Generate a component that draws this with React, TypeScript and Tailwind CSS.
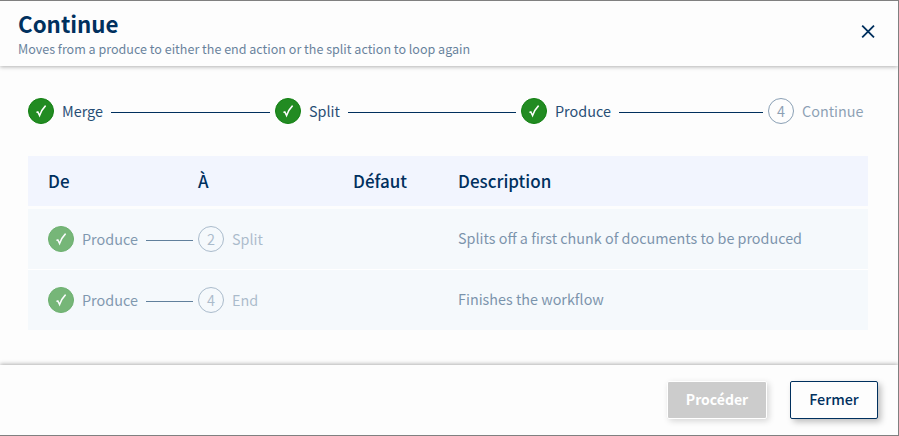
import React from "react";

function Check() {
  return (
    <svg width="12" height="14" viewBox="0 0 12 14" fill="none" stroke="white">
      <path d="M1.4 8.4 L2.8 8 L4.6 11.6 C6 7.6 7.8 4.4 10.6 1.6" strokeWidth="1.5" />
    </svg>
  );
}

function Done() {
  return (
    <span className="flex size-[26px] shrink-0 items-center justify-center rounded-full border border-[#118011] bg-[#228b22]">
      <Check />
    </span>
  );
}

function Num({ n }: { n: number }) {
  return (
    <span className="flex size-[26px] shrink-0 items-center justify-center rounded-full border border-[#00305e] text-[14.4px] leading-[24px]">
      {n}
    </span>
  );
}

function Row({ n, to, text }: { n: number; to: string; text: string }) {
  return (
    <div className="flex h-[60px] items-center bg-[#f5f9fc] pl-5">
      <div className="flex w-[150px] items-center pr-[5px] opacity-60">
        <Done />
        <span className="ml-2 w-[56px] text-[14.4px] leading-5 opacity-80">Produce</span>
        <span className="ml-2 mt-[3px] h-px w-[47px] bg-[#00305e]" />
      </div>
      <div className="flex w-[260px] items-center opacity-30">
        <Num n={n} />
        <span className="ml-2 text-[14.4px] leading-5">{to}</span>
      </div>
      <div className="mb-[2px] text-[14.36px] leading-5 opacity-50">{text}</div>
    </div>
  );
}

export default function App() {
  return (
    <div className="flex h-[436px] w-[899px] flex-col overflow-hidden border-t border-r border-b border-[#808080] bg-[#fdfdfd] text-[#00305e] [font-family:'Noto_Sans_CJK_SC',sans-serif]">
      <header className="flex h-[65px] shrink-0 justify-between pl-[18px] shadow-[0_1px_4px_0_rgba(0,0,0,0.3)]">
        <div>
          <h1 className="mt-[7px] mb-[2px] text-[22.3px] leading-[30px] font-bold">Continue</h1>
          <p className="text-[12.54px] leading-[18px] opacity-60">
            Moves from a produce to either the end action or the split action to loop again
          </p>
        </div>
        <svg className="mt-[24px] mr-[23px]" width="14" height="13" viewBox="0 0 14 13" stroke="#00305e" strokeWidth="1.8">
          <path d="M1.2 0.6L13 12.4M13 0.6L1.2 12.4" />
        </svg>
      </header>
      <main className="flex-1 px-7 pt-[32px]">
        <div className="flex h-[26px] items-center text-[14.4px] leading-5">
          <div className="flex w-[247px] items-center">
            <Done />
            <span className="ml-2 w-[41px] opacity-85">Merge</span>
            <span className="mr-[5px] ml-2 mt-[3px] h-px flex-1 bg-[#00305e]" />
          </div>
          <div className="flex w-[246px] items-center">
            <Done />
            <span className="ml-2 w-[31px] opacity-85">Split</span>
            <span className="mr-[5px] ml-2 mt-[3px] h-px flex-1 bg-[#00305e]" />
          </div>
          <div className="flex w-[247px] items-center">
            <Done />
            <span className="ml-2 w-[56px] opacity-85">Produce</span>
            <span className="mr-[5px] ml-2 mt-[3px] h-px flex-1 bg-[#00305e]" />
          </div>
          <div className="flex items-center opacity-45">
            <Num n={4} />
            <span className="ml-2">Continue</span>
          </div>
        </div>
        <div className="mt-8 w-[840px]">
          <div className="mb-[3px] flex h-[50px] items-center bg-[#f2f5fe] pl-5 text-[17px] leading-6 font-medium">
            <div className="w-[150px]">De</div>
            <div className="w-[155px]">À</div>
            <div className="w-[105px]">Défaut</div>
            <div>Description</div>
          </div>
          <div className="flex flex-col gap-px bg-white">
            <Row n={2} to="Split" text="Splits off a first chunk of documents to be produced" />
            <Row n={4} to="End" text="Finishes the workflow" />
          </div>
        </div>
      </main>
      <footer className="flex h-[70px] shrink-0 justify-end gap-[23px] pt-4 pr-[20px] shadow-[0_-1px_4px_0_rgba(0,0,0,0.3)]">
        <button className="h-[38px] w-[100px] rounded-[2px] border border-white bg-[#ccc] pb-[2px] text-[14px] leading-5 font-bold text-white shadow-[2px_2px_6px_rgba(0,0,0,0.16)]">
          Procéder
        </button>
        <button className="h-[38px] w-[88px] rounded-[2px] border border-[#00305e] bg-[#fdfdfd] pb-[2px] text-[14.4px] leading-5 font-medium shadow-[3px_3px_6px_rgba(0,0,0,0.25)]">
          Fermer
        </button>
      </footer>
    </div>
  );
}
